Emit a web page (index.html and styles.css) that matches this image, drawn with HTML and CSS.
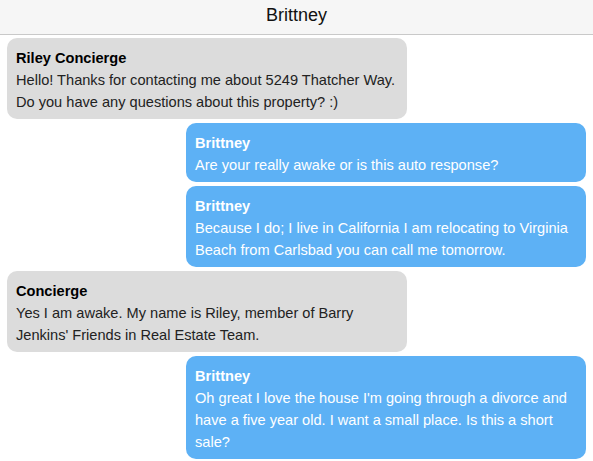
FILE: index.html
```html
<!DOCTYPE html>
<html>
<head>
<meta charset="utf-8">
<link rel="stylesheet" href="styles.css">
</head>
<body>
<header class="topbar">Brittney</header>
<main class="thread">
  <div class="msg them">
    <div class="name">Riley Concierge</div>
    <div class="text">Hello! Thanks for contacting me about 5249 Thatcher Way. Do you have any questions about this property? :)</div>
  </div>
  <div class="msg me">
    <div class="name">Brittney</div>
    <div class="text">Are your really awake or is this auto response?</div>
  </div>
  <div class="msg me">
    <div class="name">Brittney</div>
    <div class="text">Because I do; I live in California I am relocating to Virginia Beach from Carlsbad you can call me tomorrow.</div>
  </div>
  <div class="msg them">
    <div class="name">Concierge</div>
    <div class="text">Yes I am awake. My name is Riley, member of Barry Jenkins' Friends in Real Estate Team.</div>
  </div>
  <div class="msg me">
    <div class="name">Brittney</div>
    <div class="text">Oh great I love the house I'm going through a divorce and have a five year old. I want a small place. Is this a short sale?</div>
  </div>
</main>
</body>
</html>
```
FILE: styles.css
```css
html, body {
  margin: 0;
  padding: 0;
  background: #ffffff;
  font-family: "Liberation Sans", Arial, Helvetica, sans-serif;
}
.topbar {
  height: 35px;
  line-height: 31px;
  box-sizing: border-box;
  text-align: center;
  font-size: 18px;
  color: #111;
  background: #f6f6f6;
  border-bottom: 1px solid #c9c9c9;
}
.thread {
  display: flex;
  flex-direction: column;
  gap: 4px;
  padding: 3px 7px 0 7px;
}
.msg {
  width: 400px;
  box-sizing: border-box;
  padding: 9px 9px 6px 9px;
  border-radius: 10px;
  font-size: 14.6px;
  line-height: 22px;
}
.them {
  align-self: flex-start;
  background: #dcdcdc;
  color: #222;
}
.me {
  align-self: flex-end;
  background: #5db1f5;
  color: #fff;
}
.name {
  font-weight: bold;
}
.them .name {
  color: #000;
}
```
